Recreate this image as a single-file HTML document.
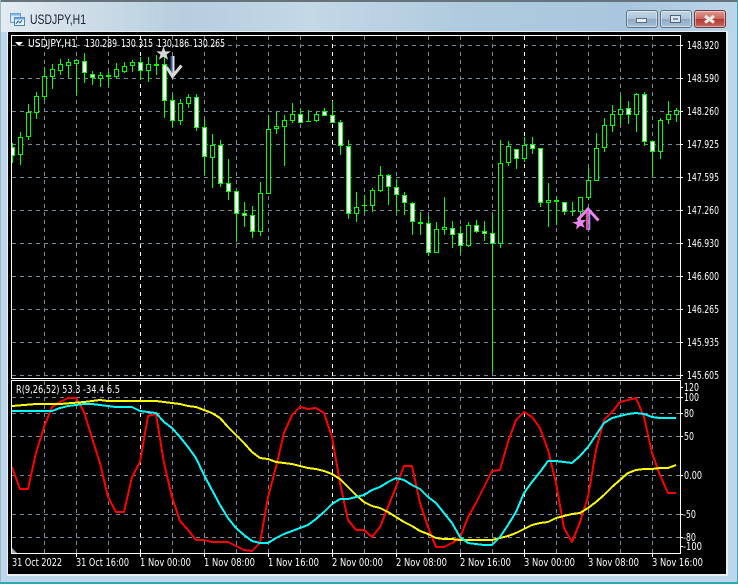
<!DOCTYPE html>
<html><head><meta charset="utf-8"><title>USDJPY,H1</title>
<style>
html,body{margin:0;padding:0;width:738px;height:584px;overflow:hidden;background:#bcd6ec}
#w{position:absolute;left:0;top:0;width:738px;height:584px;overflow:hidden;background:#bcd6ec}
#tb{position:absolute;left:0;top:0;width:738px;height:32px;background:linear-gradient(90deg,#e4ecf2 0,#d4e1ea 8%,#b6cedf 25%,#c4d8e6 42%,#b0cbdf 62%,#a8c6de 85%,#bcd6ea 100%)}
#tl{position:absolute;left:0;top:0;width:738px;height:2px;background:#66737c}
#el{position:absolute;left:0;top:0;width:1px;height:584px;background:#9db8c6}
#er{position:absolute;left:737px;top:0;width:1px;height:584px;background:#3aa8b8}
#eb{position:absolute;left:0;top:582px;width:738px;height:2px;background:#2fa8b6}
#fr{position:absolute;left:7px;top:31px;width:721px;height:545px;background:#e9eff3}
#bk{position:absolute;left:8px;top:32px;width:718px;height:542px;background:#000}
.b{position:absolute;top:10px;height:16px;border:1px solid #5d7488;border-radius:3px;box-shadow:inset 0 0 0 1px rgba(255,255,255,.45);background:linear-gradient(180deg,#c4d6e4 0,#aec5d9 48%,#8fa9c2 52%,#a8c2d8 100%)}
svg{position:absolute;left:0;top:0}
text{font-family:"DejaVu Sans","Liberation Sans",sans-serif;font-size:10.5px;fill:#fff}
</style></head><body>
<div id="w">
<div id="tb"></div><div id="tl"></div><div id="el"></div><div id="er"></div><div id="eb"></div>
<div id="fr"></div><div id="bk"></div>
<div class="b" style="left:626px;width:30px"></div>
<div class="b" style="left:660px;width:30px"></div>
<div class="b" style="left:694px;width:30px;border-color:#6b3a40;background:linear-gradient(180deg,#dd9a90 0,#c9665c 48%,#ae3a34 52%,#c46a5c 100%)"></div>
<svg width="738" height="584" viewBox="0 0 738 584">
<defs>
<clipPath id="c1"><rect x="12" y="36" width="668" height="342"/></clipPath>
<clipPath id="c2"><rect x="12" y="381" width="668" height="172"/></clipPath>
</defs>
<!-- window icon -->
<g shape-rendering="crispEdges">
<rect x="10.500" y="13.500" width="10" height="9" fill="#dcecf8" stroke="#5f9ad0"/>
<rect x="10.500" y="13.500" width="10" height="2" fill="#7fb2e0"/>
<rect x="14.500" y="17.500" width="10" height="8" fill="#eef6fc" stroke="#4a86c4"/>
<rect x="14.500" y="17.500" width="10" height="2" fill="#6aa4da"/>
<path d="M16 24l2-3 2 2 2-3" fill="none" stroke="#3a78b8"/>
</g>
<text x="30" y="24" textLength="56" lengthAdjust="spacingAndGlyphs" style="font-family:'Liberation Sans',sans-serif;font-size:13.500px;fill:#1c2233">USDJPY,H1</text>
<!-- buttons glyphs -->
<rect x="636.500" y="18.500" width="10" height="4" fill="#e8eef4" stroke="#5a6f84" shape-rendering="crispEdges"/>
<rect x="670.500" y="15.500" width="10" height="7" fill="#dde6ee" stroke="#4d6277" shape-rendering="crispEdges"/>
<rect x="673" y="18" width="5" height="2" fill="#7d92a6" shape-rendering="crispEdges"/>
<path d="M705 16l9 6.500M714 16l-9 6.500" stroke="#ece6e4" stroke-width="3.200" fill="none"/>

<!-- grid -->
<g fill="none" stroke="#778899" stroke-dasharray="4 4" shape-rendering="crispEdges">
<path clip-path="url(#c1)" d="M12 45.500H680M12 78.500H680M12 111.500H680M12 144.500H680M12 177.500H680M12 210.500H680M12 243.500H680M12 276.500H680M12 309.500H680M12 342.500H680M12 375.500H680"/>
<path clip-path="url(#c2)" d="M12 397.500H680M12 413.500H680M12 436.500H680M12 475.500H680M12 514.500H680M12 537.500H680"/>
<path d="M44.500 36V378M76.500 36V378M108.500 36V378M172.500 36V378M204.500 36V378M236.500 36V378M268.500 36V378M300.500 36V378M364.500 36V378M396.500 36V378M428.500 36V378M460.500 36V378M492.500 36V378M556.500 36V378M588.500 36V378M620.500 36V378M652.500 36V378"/>
<path d="M44.500 381V553M76.500 381V553M108.500 381V553M172.500 381V553M204.500 381V553M236.500 381V553M268.500 381V553M300.500 381V553M364.500 381V553M396.500 381V553M428.500 381V553M460.500 381V553M492.500 381V553M556.500 381V553M588.500 381V553M620.500 381V553M652.500 381V553"/>
</g>
<path d="M140.500 36V378M332.500 36V378M524.500 36V378M140.500 381V553M332.500 381V553M524.500 381V553" fill="none" stroke="#fff" stroke-dasharray="4 4" shape-rendering="crispEdges"/>

<!-- candles -->
<g clip-path="url(#c1)" shape-rendering="crispEdges">
<path fill="none" stroke="#0f0" d="M12.500 143V163M20.500 132V165M28.500 104V140M36.500 92V119M44.500 67V100M52.500 64V89M60.500 59V75M68.500 59V78M76.500 59V95M84.500 53V83M92.500 71V85M100.500 72V87M108.500 72V86M116.500 63V78M124.500 62V73M132.500 60V72M140.500 57V80M148.500 57V82M156.500 55V75M164.500 55V118M172.500 94V127M180.500 99V125M188.500 94V108M196.500 94V131M204.500 119V175M212.500 134V188M220.500 140V187M228.500 159V200M236.500 191V242M244.500 202V227M252.500 206V238M260.500 182V236M268.500 115V194M276.500 112V134M284.500 115V166M292.500 103V123M300.500 108V123M308.500 110V122M316.500 112V122M324.500 108V116M332.500 101V123M340.500 120V155M348.500 140V219M356.500 192V222M364.500 195V213M372.500 188V212M380.500 166V192M388.500 174V205M396.500 179V213M404.500 192V215M412.500 202V235M420.500 212V235M428.500 216V256M436.500 222V253M444.500 197V235M452.500 221V248M460.500 226V253M468.500 222V247M476.500 220V233M484.500 221V241M492.500 214V372M500.500 140V248M508.500 141V166M516.500 149V169M524.500 137V162M532.500 137V154M540.500 148V207M548.500 183V227M556.500 196V225M564.500 202V215M572.500 202V216M580.500 197V221M588.500 168V200M596.500 133V181M604.500 118V152M612.500 105V132M620.500 95V124M628.500 101V124M636.500 93V132M644.500 92V146M652.500 141V177M660.500 118V159M668.500 101V124M676.500 108V122"/>
<path fill="#000" stroke="#0f0" d="M18.500 137.500h4v17h-4zM26.500 112.500h4v24h-4zM34.500 96.500h4v16h-4zM42.500 76.500h4v20h-4zM50.500 69.500h4v7h-4zM58.500 64.500h4v6h-4zM66.500 62.500h4v3h-4zM74.500 60.500h4v3h-4zM98.500 75.500h4v3h-4zM114.500 69.500h4v7h-4zM122.500 66.500h4v5h-4zM130.500 62.500h4v3h-4zM146.500 64.500h4v6h-4zM178.500 103.500h4v17h-4zM186.500 97.500h4v6h-4zM210.500 145.500h4v12h-4zM258.500 193.500h4v38h-4zM266.500 129.500h4v64h-4zM274.500 126.500h4v2h-4zM282.500 120.500h4v6h-4zM290.500 114.500h4v6h-4zM314.500 114.500h4v6h-4zM354.500 207.500h4v6h-4zM370.500 190.500h4v15h-4zM378.500 175.500h4v15h-4zM434.500 229.500h4v23h-4zM442.500 227.500h4v2h-4zM466.500 225.500h4v20h-4zM498.500 163.500h4v80h-4zM506.500 146.500h4v16h-4zM522.500 145.500h4v13h-4zM546.500 200.500h4v2h-4zM578.500 197.500h4v14h-4zM586.500 180.500h4v17h-4zM594.500 148.500h4v32h-4zM602.500 125.500h4v22h-4zM610.500 114.500h4v11h-4zM618.500 109.500h4v5h-4zM634.500 94.500h4v20h-4zM658.500 120.500h4v31h-4zM666.500 114.500h4v5h-4zM674.500 110.500h4v4h-4z"/>
<path fill="#fff" stroke="#0f0" d="M10.500 147.500h4v8h-4zM82.500 61.500h4v11h-4zM90.500 74.500h4v3h-4zM138.500 62.500h4v8h-4zM162.500 64.500h4v36h-4zM170.500 100.500h4v20h-4zM194.500 97.500h4v30h-4zM202.500 127.500h4v29h-4zM218.500 145.500h4v38h-4zM226.500 183.500h4v8h-4zM234.500 191.500h4v22h-4zM242.500 213.500h4v2h-4zM250.500 215.500h4v16h-4zM298.500 114.500h4v8h-4zM322.500 111.500h4v4h-4zM330.500 115.500h4v7h-4zM338.500 122.500h4v23h-4zM346.500 146.500h4v67h-4zM386.500 175.500h4v11h-4zM394.500 187.500h4v7h-4zM402.500 195.500h4v7h-4zM410.500 203.500h4v18h-4zM426.500 223.500h4v29h-4zM450.500 228.500h4v6h-4zM458.500 233.500h4v12h-4zM474.500 225.500h4v6h-4zM482.500 231.500h4v2h-4zM490.500 233.500h4v10h-4zM514.500 149.500h4v9h-4zM530.500 144.500h4v4h-4zM538.500 148.500h4v54h-4zM562.500 202.500h4v9h-4zM626.500 108.500h4v6h-4zM642.500 94.500h4v47h-4zM650.500 141.500h4v10h-4z"/>
<path fill="#0f0" d="M106 75h5v2h-5zM154 64h5v2h-5zM306 121h5v1h-5zM362 205h5v1h-5zM418 222h5v2h-5zM554 200h5v2h-5zM570 211h5v1h-5z"/>
</g>

<!-- arrows -->
<path d="M171.500 56V76" stroke="#3a5aa8" stroke-width="2" fill="none"/>
<path d="M173.500 56V76" stroke="#dfe4ea" stroke-width="2" fill="none"/>
<path d="M166.500 67l6 9.500 9-11" stroke="#d8d8d8" stroke-width="3" fill="none"/>
<path d="M163.500 46.500l1.900 5 5.400-.2-4.200 3.300 1.500 5.200-4.600-3-4.600 3 1.500-5.200-4.200-3.300 5.400.2z" fill="#d6d6d6"/>
<path d="M587 212V230" stroke="#e0509a" stroke-width="2.200" fill="none"/>
<path d="M589.300 212V230" stroke="#a890f0" stroke-width="2" fill="none"/>
<path d="M577.500 220l10.500-11 10.500 11.500" stroke="#ee82ee" stroke-width="3" fill="none"/>
<path d="M579 216l1.900 4.300 5.200-.6-3.300 3.700 2 4.400-4.700-1.900-3.900 3.700.6-4.800-4.600-2.600 5-.6z" fill="#ee82ee"/>

<!-- indicator -->
<g clip-path="url(#c2)" fill="none" stroke-width="2" shape-rendering="crispEdges" stroke-linejoin="round">
<polyline stroke="#f00" points="12,467 20,489 28,489 36,453 44,427 52,407 60,402 68,398 76,398 84,412 92,438 100,463 108,497 116,512 124,512 132,477 140,462 148,416 156,414 164,463 172,497 180,521 188,530 196,540 204,540 212,542 220,542 228,542 236,546 244,550 252,551 260,543 268,497 276,467 284,433 292,415 300,407 308,409 316,408 324,413 332,437 340,483 348,520 356,530 364,530 372,537 380,527 388,507 396,487 404,466 412,466 420,503 428,527 436,547 444,547 452,543 460,538 468,517 476,503 484,487 492,471 500,470 508,442 516,420 524,412 532,417 540,428 548,450 556,483 564,528 572,542 580,522 588,497 596,450 604,420 612,412 620,402 628,400 636,398 644,417 652,453 660,475 668,493 676,493"/>
<polyline stroke="#ff0" points="12,406 36,404 60,404 84,402 92,401 100,400 108,401 116,401 140,401 156,401 164,402 172,403 180,404 188,406 196,407 204,410 212,413 220,418 228,427 236,435 244,443 252,452 260,458 268,459 276,462 284,463 292,464 300,466 308,468 316,469 324,471 332,474 340,479 348,487 356,495 364,502 372,506 380,508 388,512 396,517 404,522 412,526 420,531 428,534 436,538 444,539 452,539 460,540 492,540 500,538 508,536 516,533 524,529 532,525 540,523 548,522 556,518 564,516 572,514 580,513 588,508 596,502 604,495 612,487 620,480 628,473 636,470 644,469 652,469 660,468 668,468 676,465"/>
<polyline stroke="#0ff" points="12,411 52,411 60,408 68,406 76,405 84,404 92,404 100,405 108,406 116,407 132,407 140,411 148,412 156,413 164,422 172,428 180,437 188,447 196,458 204,475 212,490 220,505 228,518 236,528 244,535 252,541 260,543 268,543 276,538 284,534 292,531 300,528 308,525 316,519 324,512 332,504 340,499 348,499 356,497 364,495 372,490 380,487 388,482 396,478 404,480 412,485 420,489 428,497 436,503 444,513 452,523 460,537 468,543 476,544 484,545 492,545 500,537 508,525 516,512 524,493 532,482 540,472 548,461 556,461 564,462 572,463 580,456 588,447 596,435 604,423 612,418 620,416 628,414 636,413 644,414 652,417 660,418 668,418 676,418"/>
</g>
<path d="M12 548l5 5h-5z" fill="#9aa6b2"/>

<!-- frames -->
<g fill="none" stroke="#fff" shape-rendering="crispEdges">
<path d="M11.500 35.500H680.500V378.500H11.500Z"/>
<path d="M11.500 380.500H680.500V553.500H11.500Z"/>
<path d="M680 45.500h3M680 78.500h3M680 111.500h3M680 144.500h3M680 177.500h3M680 210.500h3M680 243.500h3M680 276.500h3M680 309.500h3M680 342.500h3M680 375.500h3M680 387.500h3M680 397.500h3M680 413.500h3M680 436.500h3M680 475.500h3M680 514.500h3M680 537.500h3M680 546.500h3"/>
<path d="M76.500 553v4M140.500 553v4M204.500 553v4M268.500 553v4M332.500 553v4M396.500 553v4M460.500 553v4M524.500 553v4M588.500 553v4M652.500 553v4"/>
</g>

<!-- legend -->
<path d="M15 42h8l-4 4z" fill="#fff"/>
<text x="28" y="47" textLength="49" lengthAdjust="spacingAndGlyphs">USDJPY,H1</text>
<text x="85" y="47" textLength="32" lengthAdjust="spacingAndGlyphs">130.289</text>
<text x="121" y="47" textLength="32" lengthAdjust="spacingAndGlyphs">130.315</text>
<text x="157" y="47" textLength="32" lengthAdjust="spacingAndGlyphs">130.186</text>
<text x="193" y="47" textLength="32" lengthAdjust="spacingAndGlyphs">130.265</text>
<text x="16" y="393" textLength="104" lengthAdjust="spacingAndGlyphs">R(9,26,52) 53.3 -34.4 6.5</text>

<!-- price axis -->
<text x="687" y="49" textLength="32" lengthAdjust="spacingAndGlyphs">148.920</text>
<text x="687" y="82" textLength="32" lengthAdjust="spacingAndGlyphs">148.590</text>
<text x="687" y="115" textLength="32" lengthAdjust="spacingAndGlyphs">148.260</text>
<text x="687" y="148" textLength="32" lengthAdjust="spacingAndGlyphs">147.925</text>
<text x="687" y="181" textLength="32" lengthAdjust="spacingAndGlyphs">147.595</text>
<text x="687" y="214" textLength="32" lengthAdjust="spacingAndGlyphs">147.260</text>
<text x="687" y="247" textLength="32" lengthAdjust="spacingAndGlyphs">146.930</text>
<text x="687" y="280" textLength="32" lengthAdjust="spacingAndGlyphs">146.600</text>
<text x="687" y="313" textLength="32" lengthAdjust="spacingAndGlyphs">146.265</text>
<text x="687" y="346" textLength="32" lengthAdjust="spacingAndGlyphs">145.935</text>
<text x="687" y="379" textLength="32" lengthAdjust="spacingAndGlyphs">145.605</text>

<!-- indicator axis -->
<text x="684" y="391" textLength="15" lengthAdjust="spacingAndGlyphs">120</text>
<text x="684" y="401" textLength="15" lengthAdjust="spacingAndGlyphs">100</text>
<text x="684" y="417" textLength="10" lengthAdjust="spacingAndGlyphs">80</text>
<text x="684" y="440" textLength="10" lengthAdjust="spacingAndGlyphs">50</text>
<text x="684" y="479" textLength="18" lengthAdjust="spacingAndGlyphs">0.00</text>
<text x="683" y="518" textLength="13" lengthAdjust="spacingAndGlyphs">-50</text>
<text x="683" y="541" textLength="13" lengthAdjust="spacingAndGlyphs">-80</text>
<text x="683" y="550" textLength="19" lengthAdjust="spacingAndGlyphs">-100</text>

<!-- time axis -->
<text x="12" y="566" textLength="50" lengthAdjust="spacingAndGlyphs">31 Oct 2022</text>
<text x="76" y="566" textLength="53" lengthAdjust="spacingAndGlyphs">31 Oct 16:00</text>
<text x="140" y="566" textLength="51" lengthAdjust="spacingAndGlyphs">1 Nov 00:00</text>
<text x="204" y="566" textLength="51" lengthAdjust="spacingAndGlyphs">1 Nov 08:00</text>
<text x="268" y="566" textLength="51" lengthAdjust="spacingAndGlyphs">1 Nov 16:00</text>
<text x="332" y="566" textLength="51" lengthAdjust="spacingAndGlyphs">2 Nov 00:00</text>
<text x="396" y="566" textLength="51" lengthAdjust="spacingAndGlyphs">2 Nov 08:00</text>
<text x="460" y="566" textLength="51" lengthAdjust="spacingAndGlyphs">2 Nov 16:00</text>
<text x="524" y="566" textLength="51" lengthAdjust="spacingAndGlyphs">3 Nov 00:00</text>
<text x="588" y="566" textLength="51" lengthAdjust="spacingAndGlyphs">3 Nov 08:00</text>
<text x="652" y="566" textLength="51" lengthAdjust="spacingAndGlyphs">3 Nov 16:00</text>
</svg>
</div>
</body></html>
